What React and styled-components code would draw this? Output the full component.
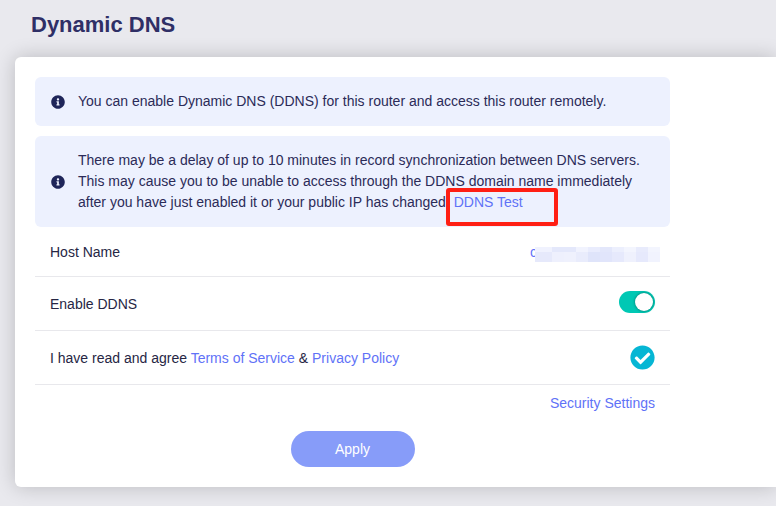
import React from "react";
import styled, { createGlobalStyle } from "styled-components";
import { FaInfoCircle, FaCheckCircle } from "react-icons/fa";

const GlobalStyle = createGlobalStyle`
	html, body {
		margin: 0;
		height: 100%;
		background: #e9e9ee;
		overflow: hidden;
	}
	body {
		font-family: "Liberation Sans", Arial, sans-serif;
		font-size: 14px;
		color: #2b2b58;
	}
`;

const Page = styled.div`
	width: 776px;
	height: 506px;
	overflow: hidden;
`;
const Title = styled.h1`
	margin: 0;
	padding: 12px 0 0 31px;
	height: 57px;
	box-sizing: border-box;
	font-size: 22px;
	line-height: 25px;
	font-weight: 700;
	color: #2f2f66;
`;
const Card = styled.div`
	margin-left: 15px;
	height: 430px;
	box-sizing: border-box;
	padding: 20px;
	background: #fff;
	border-radius: 6px 0 0 6px;
	box-shadow: 0 0 20px rgba(0, 0, 0, 0.2);
`;
const Content = styled.div`
	width: 635px;
`;
const Alert = styled.div`
	display: flex;
	align-items: center;
	min-height: ${p => p.$height}px;
	margin-bottom: ${p => p.$gap}px;
	padding: 0 20px 0 16px;
	box-sizing: border-box;
	background: #edf1fe;
	border-radius: 6px;
	line-height: 21px;
	color: #2b2b58;
`;
const InfoIcon = styled(FaInfoCircle)`
	flex: none;
	width: 14px;
	height: 14px;
	margin-right: 13px;
	color: #1f2559;
`;
const TextLink = styled.a`
	color: #5f72f7;
	text-decoration: none;
`;
const TestLink = styled(TextLink)`
	position: relative;
`;
const Highlight = styled.span`
	position: absolute;
	left: -8px;
	top: -6px;
	width: 112px;
	height: 38px;
	box-sizing: border-box;
	border: 4px solid #ff1f14;
	border-radius: 3px;
`;
const Row = styled.div`
	display: flex;
	align-items: center;
	justify-content: space-between;
	height: ${p => p.$height}px;
	padding: 1px 15px 0;
	box-sizing: border-box;
	border-bottom: 1px solid #e8e8ec;
	color: #262644;
`;
const HostValue = styled.div`
	position: relative;
	width: 125px;
	color: #5f72f7;
`;
const BlurPatch = styled.div`
	position: absolute;
	left: 5px;
	top: 3px;
	display: flex;
	height: 15px;
`;
const BlurCell = styled.span`
	width: ${p => p.$width}px;
	background: linear-gradient(${p => p.$top} 5px, ${p => p.$bottom} 5px);
`;
const Switch = styled.div`
	display: flex;
	justify-content: flex-end;
	align-items: center;
	width: 36px;
	height: 22px;
	margin-bottom: 4px;
	padding: 2px;
	box-sizing: border-box;
	border-radius: 11px;
	background: #00c8b4;
`;
const Knob = styled.span`
	width: 18px;
	height: 18px;
	border-radius: 50%;
	background: #fff;
	box-shadow: 0 0 3px rgba(0, 0, 0, 0.45);
`;
const CheckIcon = styled(FaCheckCircle)`
	width: 25px;
	height: 25px;
	margin-bottom: 2px;
	color: #06b6d4;
`;
const SecurityRow = styled.div`
	display: flex;
	justify-content: flex-end;
	padding: 10px 15px 0;
	line-height: 17px;
`;
const ButtonRow = styled.div`
	display: flex;
	justify-content: center;
	margin-top: 19px;
`;
const ApplyButton = styled.button`
	width: 124px;
	height: 36px;
	border: none;
	border-radius: 18px;
	background: #879cf9;
	color: #fff;
	font: inherit;
`;

// width, top colour, bottom colour of each pixelated block
const blurCells = [
	[17, "#f0f2fe", "#e6e9fb"],
	[12, "#e4e8fb", "#eef0fd"],
	[12, "#e4e8fb", "#eff1fd"],
	[12, "#f1f3fe", "#e9ecfc"],
	[12, "#e9ecfd", "#dfe4fa"],
	[12, "#e3e7fb", "#e1e5fb"],
	[12, "#eceffd", "#e6e9fc"],
	[12, "#f3f5fe", "#eff1fd"],
	[12, "#e8ebfc", "#e6e9fc"],
	[12, "#f3f5fe", "#f1f3fe"],
];

export default function App() {
	return (
		<Page>
			<GlobalStyle />
			<Title>Dynamic DNS</Title>
			<Card>
				<Content>
					<Alert $height={49} $gap={10}>
						<InfoIcon />
						<span>You can enable Dynamic DNS (DDNS) for this router and access this router remotely.</span>
					</Alert>
					<Alert $height={91} $gap={0}>
						<InfoIcon />
						<span>
							There may be a delay of up to 10 minutes in record synchronization between DNS servers.
							<br />
							This may cause you to be unable to access through the DDNS domain name immediately
							<br />
							after you have just enabled it or your public IP has changed.{" "}
							<TestLink href="#">
								DDNS Test
								<Highlight />
							</TestLink>
						</span>
					</Alert>
					<Row $height={50}>
						<span>Host Name</span>
						<HostValue>
							c
							<BlurPatch>
								{blurCells.map(([width, top, bottom], i) => (
									<BlurCell key={i} $width={width} $top={top} $bottom={bottom} />
								))}
							</BlurPatch>
						</HostValue>
					</Row>
					<Row $height={54}>
						<span>Enable DDNS</span>
						<Switch>
							<Knob />
						</Switch>
					</Row>
					<Row $height={54}>
						<span>
							I have read and agree <TextLink href="#">Terms of Service</TextLink> &amp;{" "}
							<TextLink href="#">Privacy Policy</TextLink>
						</span>
						<CheckIcon />
					</Row>
					<SecurityRow>
						<TextLink href="#">Security Settings</TextLink>
					</SecurityRow>
					<ButtonRow>
						<ApplyButton>Apply</ApplyButton>
					</ButtonRow>
				</Content>
			</Card>
		</Page>
	);
}
